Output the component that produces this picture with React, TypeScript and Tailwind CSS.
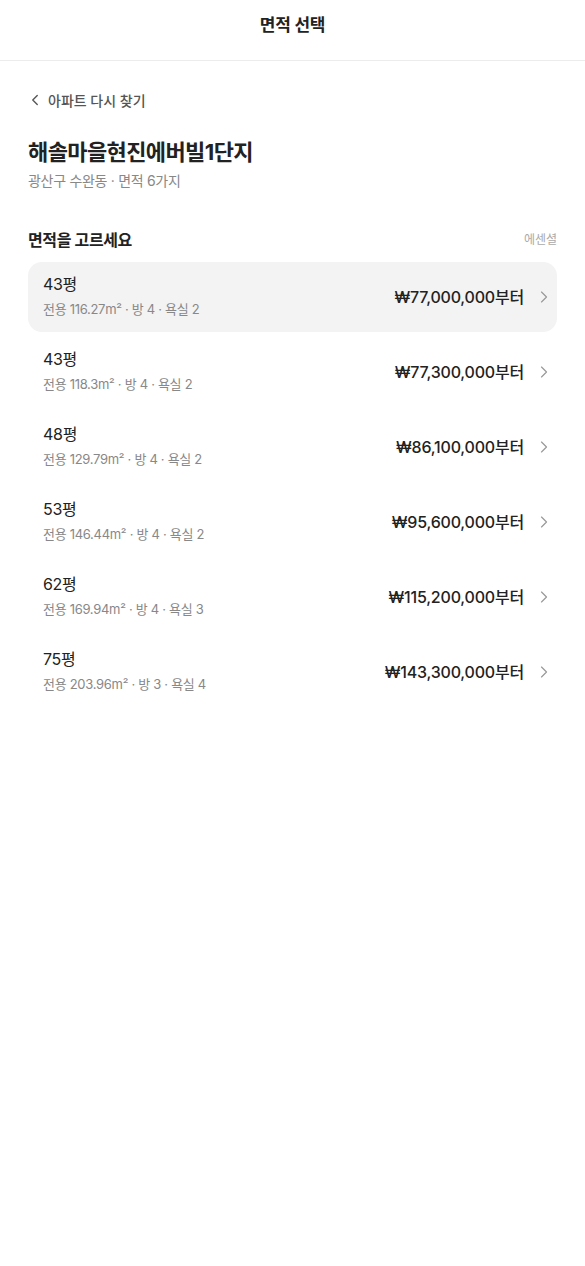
import { ChevronLeft, ChevronRight } from "lucide-react";

const sizes = [
  { pyeong: "43평", area: "116.27", rooms: 4, baths: 2, price: "₩77,000,000" },
  { pyeong: "43평", area: "118.3", rooms: 4, baths: 2, price: "₩77,300,000" },
  { pyeong: "48평", area: "129.79", rooms: 4, baths: 2, price: "₩86,100,000" },
  { pyeong: "53평", area: "146.44", rooms: 4, baths: 2, price: "₩95,600,000" },
  { pyeong: "62평", area: "169.94", rooms: 4, baths: 3, price: "₩115,200,000" },
  { pyeong: "75평", area: "203.96", rooms: 3, baths: 4, price: "₩143,300,000" },
];

export default function App() {
  return (
    <div
      className="min-h-[1266px] bg-white text-[#222]"
      style={{ fontFamily: 'Inter, "Noto Sans CJK KR", "Noto Sans", sans-serif' }}
    >
      <header className="h-[61px] flex items-center justify-center border-b border-[#ececec]">
        <h1 className="text-[17px] font-semibold tracking-[-0.3px] -mt-[8px]">면적 선택</h1>
      </header>

      <main className="px-[28px] pt-[28px]">
        <button className="flex items-center gap-[4px] text-[14px] font-medium text-[#555] h-[22px]">
          <ChevronLeft size={18} strokeWidth={1.8} className="-ml-[2px]" />
          아파트 다시 찾기
        </button>

        <h2 className="mt-[26px] text-[22px] font-bold leading-[30px] tracking-[-0.6px]">
          해솔마을현진에버빌1단지
        </h2>
        <p className="mt-[4px] text-[14px] leading-[20px] text-[#888] tracking-[-0.3px]">
          광산구 수완동 · 면적 6가지
        </p>

        <div className="mt-[37px] flex items-center justify-between h-[24px]">
          <h3 className="text-[16px] font-semibold tracking-[-0.4px]">면적을 고르세요</h3>
          <span className="text-[12px] text-[#aaa]">에센셜</span>
        </div>

        <ul className="mt-[10px] flex flex-col gap-[5px]">
          {sizes.map((s, i) => (
            <li
              key={i}
              className={
                "h-[70px] rounded-[14px] pl-[15px] pr-[3px] flex items-center justify-between " +
                (i === 0 ? "bg-[#f3f3f3]" : "")
              }
            >
              <div className="flex flex-col -mt-[4px]">
                <span className="text-[16px] font-normal leading-[22px] tracking-[-0.3px]">
                  {s.pyeong}
                </span>
                <span className="mt-[5px] text-[13px] leading-[18px] text-[#888] tracking-[-0.3px]">
                  전용 {s.area}m² · 방 {s.rooms} · 욕실 {s.baths}
                </span>
              </div>
              <div className="flex items-center gap-[10px]">
                <span className="text-[16px] font-medium tracking-[-0.2px]">
                  {s.price}부터
                </span>
                <ChevronRight size={20} strokeWidth={1.4} className="text-[#999]" />
              </div>
            </li>
          ))}
        </ul>
      </main>
    </div>
  );
}
